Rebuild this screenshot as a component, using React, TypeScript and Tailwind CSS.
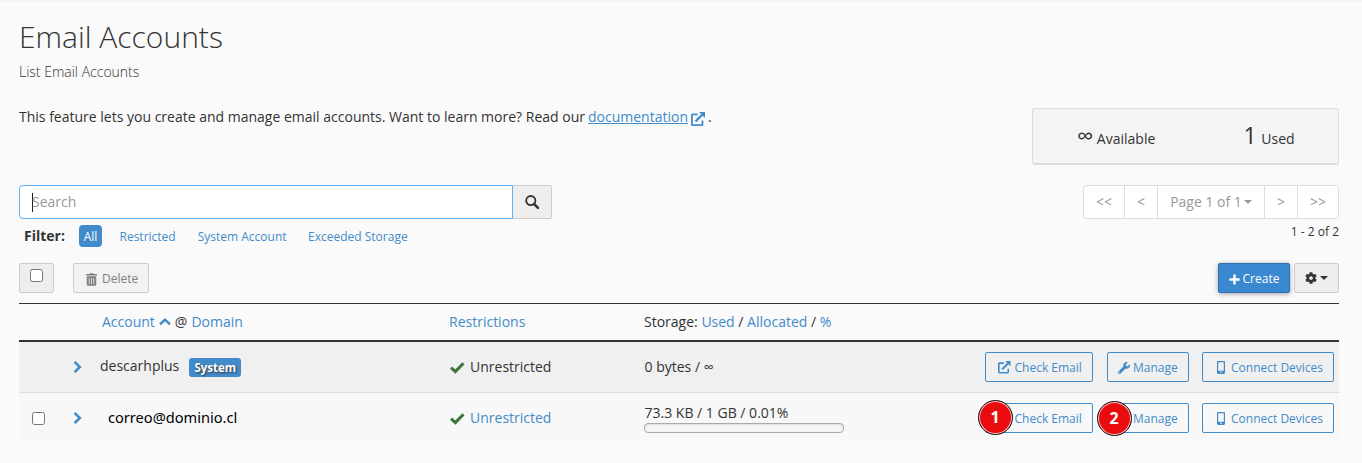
import { ReactNode } from "react";
import { clsx } from "clsx";
import { FaCog, FaMobileAlt, FaTrashAlt, FaWrench } from "react-icons/fa";

interface Account {
  name: string;
  system: boolean;
  used: string;
  markers: boolean;
}

const ACCOUNTS: Account[] = [
  { name: "descarhplus", system: true, used: "0 bytes / ∞", markers: false },
  { name: "correo@dominio.cl", system: false, used: "73.3 KB / 1 GB / 0.01%", markers: true },
];

const PAGES = [
  { label: "<<", width: "w-[42px] rounded-l" },
  { label: "<", width: "w-[34px] -ml-px" },
  { label: "Page 1 of 1", width: "w-[108px] -ml-px", caret: true },
  { label: ">", width: "w-[34px] -ml-px" },
  { label: ">>", width: "w-[42px] -ml-px rounded-r" },
];

function ExternalIcon({ className }: { className?: string }) {
  return (
    <svg viewBox="0 0 14 14" className={className} fill="none" stroke="currentColor">
      <path d="M6.6 2.4H1.6a.7.7 0 0 0-.7.7v9.3c0 .4.3.7.7.7h9.2c.4 0 .7-.3.7-.7V8.6" strokeWidth="1.8" />
      <path d="M4.6 9.4l6.6-6.6" strokeWidth="2.3" />
      <path d="M8 0h6v6z" fill="currentColor" stroke="none" />
    </svg>
  );
}

function SearchIcon() {
  return (
    <svg viewBox="0 0 14 14" className="size-[14px]" fill="none" stroke="currentColor">
      <circle cx="5.8" cy="5.6" r="4.6" strokeWidth="1.8" />
      <path d="M9 8.8l4 4" strokeWidth="2.6" strokeLinecap="round" />
    </svg>
  );
}

function StrokeIcon({ d, className, strokeWidth = 2.4 }: { d: string; className?: string; strokeWidth?: number }) {
  return (
    <svg viewBox="0 0 14 14" className={clsx("shrink-0", className)} fill="none" stroke="currentColor" strokeWidth={strokeWidth}>
      <path d={d} />
    </svg>
  );
}

function Caret() {
  return <span className="inline-block border-x-4 border-t-4 border-x-transparent border-t-current" />;
}

function Checkbox() {
  return <span className="block w-[13px] h-[13px] rounded-[2.5px] border border-[#767676] bg-white" />;
}

function ActionButton({ className, children }: { className: string; children: ReactNode }) {
  return (
    <button
      className={clsx(
        "relative flex h-[30px] items-center rounded-xs border border-[#428bca] pt-px text-xs text-[#428bca] whitespace-nowrap",
        className
      )}
    >
      {children}
    </button>
  );
}

function Marker({ children, className }: { children: ReactNode; className: string }) {
  return (
    <span
      className={clsx(
        "absolute flex size-[35px] items-center justify-center rounded-full border-[1.5px] border-[#181818] bg-[#ea0b0e] pb-px font-['Noto_Sans',sans-serif] text-base font-bold text-white shadow-[inset_0_0_0_1px_#f6d5d5]",
        className
      )}
    >
      {children}
    </span>
  );
}

function AccountRow({ account }: { account: Account }) {
  return (
    <div
      className={clsx(
        "flex items-center",
        account.system ? "h-[51px] border-b border-[#ddd] bg-[#f0f0f0]" : "h-[50px] bg-[#f8f8f8]"
      )}
    >
      <div className="w-[53px] pl-[13px]">{!account.system && <Checkbox />}</div>
      <div className="w-[28px] text-[#428bca]">
        <StrokeIcon d="M2.6 1.8L7.8 7l-5.2 5.2" className="size-[14px]" strokeWidth={2.6} />
      </div>
      <div className="w-[350px]">
        {account.system ? (
          <div className="flex items-center">
            <span className="-mt-[2px]">{account.name}</span>
            <span className="ml-[10px] mt-px flex h-[19px] w-[52px] items-center justify-center rounded-[3px] bg-[#428bca] text-[11.5px] font-bold text-white [text-shadow:1px_1px_2px_#333]">
              System
            </span>
          </div>
        ) : (
          <div className="-mt-[3px] pl-2 font-['Noto_Sans',sans-serif] text-[14.6px] text-black">{account.name}</div>
        )}
      </div>
      <div className="flex w-[194.5px] items-center">
        <StrokeIcon d="M1 7.2l4 3.6 7.6-7.8" className="mr-[5px] size-[15px] text-[#3c763d]" strokeWidth={2.9} />
        <span className={account.system ? "" : "text-[#428bca]"}>Unrestricted</span>
      </div>
      <div className="flex-1">
        <div>{account.used}</div>
        {!account.system && (
          <div className="-ml-[0.5px] h-[10px] w-[200px] rounded-[4px] border border-[#aaa] bg-[#f5f5f5] shadow-[inset_0_1px_2px_rgba(0,0,0,0.1)]" />
        )}
      </div>
      <div className="flex pr-[5px]">
        <ActionButton className="w-[108px] pl-3">
          <ExternalIcon className="mr-1 size-[12.5px]" />
          Check Email
          {account.markers && <Marker className="-left-[8.5px] -top-[4.5px]">1</Marker>}
        </ActionButton>
        <ActionButton className="ml-[14px] w-[82px] pl-[10px]">
          <FaWrench className="mr-[3px] size-3" />
          Manage
          {account.markers && <Marker className="-left-[11.5px] -top-[3.5px]">2</Marker>}
        </ActionButton>
        <ActionButton className="ml-[13px] w-[132px] pl-[14px]">
          <FaMobileAlt className="mr-[6px] h-[13px] w-2" />
          Connect Devices
        </ActionButton>
      </div>
    </div>
  );
}

export default function App() {
  return (
    <div className="h-[463px] border-t-2 border-[#f5f5f5] bg-[#fafafa] pl-[19px] pr-[23px] font-['Open_Sans',sans-serif] text-sm leading-5 text-[#333]">
      {/* Heading */}
      <h1 className="pt-[17px] text-[30px] leading-[36px] font-light">Email Accounts</h1>
      <p className="mt-[7px] font-light">List Email Accounts</p>

      {/* Intro and usage */}
      <div className="mt-[24px] flex h-[59px] items-start justify-between">
        <p className="mt-px flex items-center">
          This feature lets you create and manage email accounts. Want to learn more? Read our
          <a href="#" className="ml-[3px] text-[#428bca] underline">documentation</a>
          <ExternalIcon className="ml-[3px] mt-[3px] size-[14px] text-[#428bca]" />
          <span className="ml-[3px]">.</span>
        </p>
        <div className="mt-[2px] flex h-[57px] w-[307px] rounded-[3px] border border-b-2 border-[#ddd] bg-[#f4f4f4] pt-[11px] leading-[30px]">
          <div className="w-1/2 pl-[44px]"><span className="text-[23px]">∞</span> Available</div>
          <div className="w-1/2 pl-[58px]"><span className="text-[23px]">1</span> <span className="ml-px">Used</span></div>
        </div>
      </div>

      {/* Search and pagination */}
      <div className="mt-[20px] flex h-[34px] justify-between">
        <div className="flex">
          <div className="flex w-[494px] items-center rounded-l border border-[#5eb0f5] bg-white pl-3 text-[#999]">
            <span className="-mr-px h-[19px] w-px bg-[#222]" />
            Search
          </div>
          <button className="flex w-[39px] items-center justify-center rounded-r-xs border border-l-0 border-[#ccc] bg-[#eee]">
            <SearchIcon />
          </button>
        </div>
        <div className="flex">
          {PAGES.map((page) => (
            <button
              key={page.label}
              className={clsx("flex items-center justify-center gap-[2px] border border-[#ddd] bg-white text-[#999]", page.width)}
            >
              {page.label}
              {page.caret && <Caret />}
            </button>
          ))}
        </div>
      </div>

      {/* Filters */}
      <div className="mt-[6px] flex h-[22px] items-center text-xs text-[#428bca]">
        <span className="w-[60px] pl-[5px] text-sm font-bold text-[#333]">Filter:</span>
        <span className="flex h-[22px] w-[23px] items-center justify-center rounded bg-[#428bca] pt-px text-white">All</span>
        <a href="#" className="ml-[17.5px] pt-[2px]">Restricted</a>
        <a href="#" className="ml-[22px] pt-[2px]">System Account</a>
        <a href="#" className="ml-[21.5px] pt-[2px]">Exceeded Storage</a>
        <span className="-mt-[8px] ml-auto text-[#333]">1 - 2 of 2</span>
      </div>

      {/* Toolbar */}
      <div className="mt-4 flex h-[30px] text-xs">
        <button className="w-[35px] rounded-xs border border-[#ccc] bg-[#eee] pb-[6px] pl-[10px]">
          <Checkbox />
        </button>
        <button className="ml-[19px] flex w-[76px] items-center rounded-xs border border-[#ccc] bg-[#f2f2f2] pl-3 pt-[2px] text-[#808080]">
          <FaTrashAlt className="mr-[5px] h-[13px] w-[11px]" />
          Delete
        </button>
        <button className="ml-auto flex w-[72px] items-center justify-center gap-[3px] rounded-xs border border-[#2f70b0] bg-[#3a89d0] pt-[2px] text-white shadow-[0_1px_5px_rgba(0,0,0,0.35)]">
          <StrokeIcon d="M7 0.5v13M0.5 7h13" className="size-[11px]" strokeWidth={3.2} />
          Create
        </button>
        <button className="ml-1 flex w-[45px] items-center justify-center gap-[3px] rounded-xs border border-[#ccc] bg-[#eee]">
          <FaCog className="size-3" />
          <Caret />
        </button>
      </div>

      {/* Accounts */}
      <div className="mt-[10px] border-t border-[#333]">
        <div className="flex h-[38px] items-center border-b-2 border-[#333] text-[#428bca]">
          <div className="flex w-[430px] items-center pl-[83px]">
            Account
            <StrokeIcon d="M1.2 9.8L7 4.2l5.8 5.6" className="mx-1 size-3" strokeWidth={2.8} />
            <span className="mr-1 text-[#333]">@</span>
            Domain
          </div>
          <div className="w-[195px]">Restrictions</div>
          <div className="text-[#333]">
            Storage: <a href="#" className="text-[#428bca]">Used</a> / <a href="#" className="text-[#428bca]">Allocated</a> /{" "}
            <a href="#" className="text-[#428bca]">%</a>
          </div>
        </div>
        {ACCOUNTS.map((account) => (
          <AccountRow key={account.name} account={account} />
        ))}
      </div>
    </div>
  );
}
